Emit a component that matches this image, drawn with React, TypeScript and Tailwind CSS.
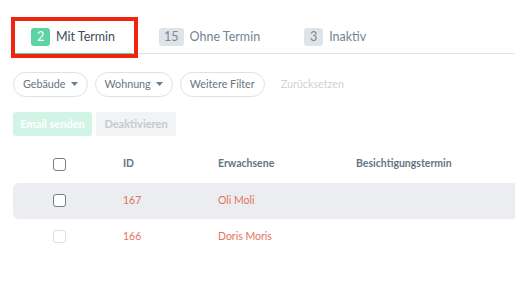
import React from "react";

type Tab = { count: number; label: string; active?: boolean };

const tabs: Tab[] = [
  { count: 2, label: "Mit Termin", active: true },
  { count: 15, label: "Ohne Termin" },
  { count: 3, label: "Inaktiv" },
];

const rows = [
  { id: 167, name: "Oli Moli", hover: true },
  { id: 166, name: "Doris Moris", hover: false },
];

function Caret() {
  return (
    <svg width="7" height="4" viewBox="0 0 7 4" className="ml-[5px]" aria-hidden>
      <path d="M0 0h7L3.5 4z" fill="#6b7c88" />
    </svg>
  );
}

function Checkbox({ light }: { light?: boolean }) {
  return (
    <span
      className={
        light
          ? "block h-[13px] w-[13px] rounded-[3px] border border-[#d9dfe3] bg-white"
          : "block h-[13px] w-[13px] rounded-[3px] border-[1.5px] border-[#6e7f8b] bg-white"
      }
    />
  );
}

export default function App() {
  return (
    <div className="relative h-[298px] w-[515px] overflow-hidden bg-white pt-[20px] font-['Lato','Noto_Sans',sans-serif]">
      {/* tabs */}
      <div className="ml-[15px] flex gap-[10px] border-b border-[#dfe4e8]">
        {tabs.map((t) => (
          <div
            key={t.label}
            className={
              t.active
                ? "-mb-[2px] flex items-center gap-[6px] border-b-2 border-[#5dd3a4] pb-[6px] pl-4 pr-[18px] pt-[8px]"
                : "-mb-[2px] flex items-center gap-[6px] border-b-2 border-transparent pb-[6px] pl-4 pr-[18px] pt-[8px]"
            }
          >
            <span
              className={
                t.active
                  ? "flex h-[18px] min-w-[19px] items-center justify-center rounded-[3px] bg-[#5dd3a4] px-[5px] text-[12.5px] text-white"
                  : "flex h-[18px] min-w-[19px] items-center justify-center rounded-[3px] bg-[#dfe4e8] px-[5px] text-[12.5px] text-[#7a8894]"
              }
            >
              {t.count}
            </span>
            <span className={t.active ? "text-[12.5px] text-[#3e4d58]" : "text-[12.5px] text-[#74838f]"}>{t.label}</span>
          </div>
        ))}
      </div>

      {/* filters */}
      <div className="ml-[13px] mt-[18px] flex items-center gap-[7px]">
        <button type="button" className="flex h-[25px] items-center rounded-full border border-[#dde2e6] px-[9px] text-[10.75px] text-[#66767f]">
          Gebäude
          <Caret />
        </button>
        <button type="button" className="flex h-[25px] items-center rounded-full border border-[#dde2e6] px-[9px] text-[10.75px] text-[#66767f]">
          Wohnung
          <Caret />
        </button>
        <button type="button" className="flex h-[25px] items-center rounded-full border border-[#dde2e6] px-[9px] text-[10.75px] text-[#66767f]">
          Weitere Filter
        </button>
        <span className="ml-[9px] text-[10.75px] text-[#cdd3d8]">Zurücksetzen</span>
      </div>

      {/* actions */}
      <div className="ml-[13px] mt-[15px] flex gap-[4px]">
        <button type="button" className="h-[24px] w-[79px] rounded-[3px] bg-[#d2f4e7] text-[11px] font-bold text-white">
          Email senden
        </button>
        <button type="button" className="h-[24px] w-[80px] rounded-[3px] bg-[#f1f3f4] text-[11px] font-bold text-[#c3cbd0]">
          Deaktivieren
        </button>
      </div>

      {/* table */}
      <div className="ml-[13px] mt-[10px]">
        <div className="grid h-[37px] grid-cols-[110px_95px_138px_1fr] items-center text-[10.5px] font-bold text-[#65757f]">
          <div className="pl-[40px]">
            <Checkbox />
          </div>
          <div>ID</div>
          <div>Erwachsene</div>
          <div>Besichtigungstermin</div>
        </div>
        {rows.map((r) => (
          <div
            key={r.id}
            className={
              r.hover
                ? "grid h-[36px] grid-cols-[110px_95px_138px_1fr] items-center rounded-l-[6px] bg-[#ebedf0] text-[10.5px] text-[#e2725c]"
                : "grid h-[36px] grid-cols-[110px_95px_138px_1fr] items-center text-[10.5px] text-[#e2725c]"
            }
          >
            <div className="pl-[40px]">
              <Checkbox light={!r.hover} />
            </div>
            <div>{r.id}</div>
            <div>{r.name}</div>
            <div />
          </div>
        ))}
      </div>

      {/* annotation */}
      <div className="pointer-events-none absolute left-[11px] top-[17px] h-[41px] w-[127px] border-4 border-[#f0250f]" />
    </div>
  );
}
